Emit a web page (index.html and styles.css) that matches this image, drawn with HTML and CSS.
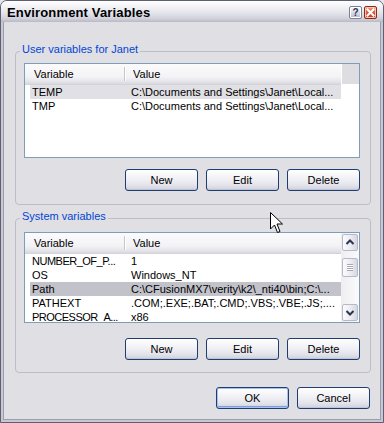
FILE: index.html
```html
<!DOCTYPE html>
<html>
<head>
<meta charset="utf-8">
<title>Environment Variables</title>
<link rel="stylesheet" href="styles.css">
</head>
<body>
<div class="window">
  <div class="titlebar">
    <span class="title">Environment Variables</span>
    <div class="caption-btns">
      <span class="cap-btn help">?</span>
      <span class="cap-btn close"><svg width="9" height="9" viewBox="0 0 9 9"><path d="M1.5 1.5 L7.5 7.5 M7.5 1.5 L1.5 7.5" stroke="#fff" stroke-width="2" stroke-linecap="square"/></svg></span>
    </div>
  </div>
  <div class="frame">
    <div class="client">
      <div class="group user">
        <span class="group-title">User variables for Janet</span>
        <div class="list user-list">
          <div class="list-main">
            <div class="list-header"><span class="hvar">Variable</span><span class="hsep"></span><span class="hval">Value</span></div>
            <div class="row sel-light"><span class="cvar">TEMP</span><span class="cval">C:\Documents and Settings\Janet\Local...</span></div>
            <div class="row"><span class="cvar">TMP</span><span class="cval">C:\Documents and Settings\Janet\Local...</span></div>
          </div>
          <div class="list-side">
            <div class="header-corner"></div>
          </div>
        </div>
        <div class="btn-row">
          <button class="btn">New</button>
          <button class="btn">Edit</button>
          <button class="btn">Delete</button>
        </div>
      </div>
      <div class="group sys">
        <span class="group-title">System variables</span>
        <div class="list sys-list">
          <div class="list-main">
            <div class="list-header"><span class="hvar">Variable</span><span class="hsep"></span><span class="hval">Value</span></div>
            <div class="row"><span class="cvar tight">NUMBER_OF_P...</span><span class="cval">1</span></div>
            <div class="row"><span class="cvar">OS</span><span class="cval">Windows_NT</span></div>
            <div class="row sel"><span class="cvar">Path</span><span class="cval">C:\CFusionMX7\verity\k2\_nti40\bin;C:\...</span></div>
            <div class="row"><span class="cvar">PATHEXT</span><span class="cval">.COM;.EXE;.BAT;.CMD;.VBS;.VBE;.JS;....</span></div>
            <div class="row"><span class="cvar tight">PROCESSOR_A...</span><span class="cval">x86</span></div>
          </div>
          <div class="list-side scrollbar">
            <div class="sb-btn"><svg width="14" height="15" viewBox="0 0 14 15"><path d="M3.5 9 L7 5.5 L10.5 9" fill="none" stroke="#2b3552" stroke-width="2"/></svg></div>
            <div class="sb-thumb"><span class="grip"></span></div>
            <div class="sb-btn down"><svg width="14" height="15" viewBox="0 0 14 15"><path d="M3.5 6 L7 9.5 L10.5 6" fill="none" stroke="#2b3552" stroke-width="2"/></svg></div>
          </div>
        </div>
        <div class="btn-row">
          <button class="btn">New</button>
          <button class="btn">Edit</button>
          <button class="btn">Delete</button>
        </div>
      </div>
      <div class="footer">
        <button class="btn default">OK</button>
        <button class="btn">Cancel</button>
      </div>
    </div>
  </div>
  <svg class="cursor" width="14" height="23" viewBox="0 0 14 23"><path d="M0.5 0.5 V17 L4.5 13 L7.5 20.5 L10 19.5 L7 12 H12.5 Z" fill="#fff" stroke="#000" stroke-width="1" stroke-linejoin="miter"/></svg>
</div>
</body>
</html>
```
FILE: styles.css
```css
html, body {
  margin: 0;
  padding: 0;
  background: #e6e6ea;
}
body {
  font-family: "Liberation Sans", Arial, sans-serif;
  font-size: 11px;
  color: #000;
}
.window {
  position: relative;
  width: 384px;
  height: 423px;
  box-sizing: border-box;
  border: 1px solid #5d6072;
  border-radius: 7px 7px 0 0;
  background: #e0dfe3;
  display: flex;
  flex-direction: column;
  overflow: hidden;
}
.titlebar {
  flex: none;
  height: 21px;
  box-sizing: border-box;
  display: flex;
  align-items: center;
  padding: 1px 6px 0 6px;
  background: linear-gradient(#ffffff 0, #f4f4f7 25%, #e2e2e9 60%, #d0d0da 85%, #b9b9c6 100%);
}
.title {
  flex: 1;
  font-weight: bold;
  font-size: 13px;
  letter-spacing: 0.15px;
  line-height: 19px;
  color: #000;
}
.caption-btns {
  display: flex;
  gap: 2px;
}
.cap-btn {
  width: 13px;
  height: 13px;
  box-sizing: border-box;
  border-radius: 2px;
  display: flex;
  align-items: center;
  justify-content: center;
}
.cap-btn.help {
  border: 1px solid #7c8098;
  box-shadow: inset 0 0 0 1px #fff;
  background: linear-gradient(#fbfbfd, #d9dae3 55%, #b3b6c6);
  font-weight: bold;
  font-size: 10px;
  line-height: 11px;
  color: #2c3454;
}
.cap-btn.close {
  border: 1px solid #8a2a18;
  box-shadow: inset 0 0 0 1px #f6c2b2;
  background: linear-gradient(#f2a080, #e25a36 50%, #c73a1a);
}
.frame {
  flex: 1;
  display: flex;
  border: 0 solid #c8c8d3;
  border-width: 0 2px 2px 2px;
}
.client {
  flex: 1;
  display: flex;
  flex-direction: column;
  border: 1px solid #9c9eb0;
  border-top: 0;
  padding: 29px 9px 0 11px;
  background: #e0dfe3;
}
.group {
  position: relative;
  flex: none;
  border: 1px solid #bebdc5;
  border-radius: 4px;
}
.group.user {
  padding: 11px 10px 13px 8px;
}
.group.sys {
  margin-top: 13px;
  padding: 13px 10px 12px 8px;
}
.group-title {
  position: absolute;
  top: -9px;
  left: 4px;
  padding: 0 2px;
  background: #e0dfe3;
  color: #0046d5;
  line-height: 13px;
}
.list {
  box-sizing: border-box;
  border: 1px solid #7f9db9;
  background: #fff;
  display: flex;
  overflow: hidden;
}
.user-list {
  height: 95px;
}
.sys-list {
  height: 91px;
}
.list-main {
  flex: 1;
  min-width: 0;
  overflow: hidden;
}
.list-side {
  flex: none;
  width: 18px;
}
.list-header {
  height: 21px;
  box-sizing: border-box;
  display: flex;
  align-items: center;
  border-bottom: 1px solid #d3d3da;
  background: linear-gradient(#fbfbfc 0, #f3f3f6 65%, #e6e6eb 85%, #d9d9e0 100%);
  white-space: nowrap;
}
.hvar {
  width: 99px;
  box-sizing: border-box;
  padding-left: 9px;
}
.hsep {
  width: 1px;
  height: 14px;
  background: #c5c4cb;
  box-shadow: 1px 0 0 #fff;
}
.hval {
  padding-left: 8px;
}
.header-corner {
  height: 20px;
  background: #dedee2;
  border-left: 1px solid #fff;
  box-sizing: border-box;
}
.row {
  display: flex;
  height: 14px;
  line-height: 14px;
  margin-left: 5px;
  white-space: nowrap;
}
.row .cvar {
  width: 99px;
  padding-left: 2px;
  flex: none;
  overflow: hidden;
}
.row .cvar.tight {
  letter-spacing: -0.5px;
}
.row.sel-light {
  background: #e0e0e5;
}
.row.sel {
  background: #c2c2ca;
}
.scrollbar {
  display: flex;
  flex-direction: column;
  box-sizing: border-box;
  padding: 1px 1px 1px 1px;
  background: linear-gradient(90deg, #eeeef2, #fbfbfc);
}
.sb-btn, .sb-thumb {
  height: 17px;
  box-sizing: border-box;
  border: 1px solid #b7b9c9;
  border-radius: 2px;
  background: linear-gradient(90deg, #fcfcfd, #e9e9ef 60%, #d6d7e0);
  display: flex;
  align-items: center;
  justify-content: center;
}
.sb-btn.down {
  margin-top: auto;
}
.sb-thumb {
  margin-top: 7px;
  height: 19px;
}
.grip {
  width: 6px;
  height: 7px;
  background: repeating-linear-gradient(#a7a9bb 0 1px, #fff 1px 2px);
}
.btn-row {
  display: flex;
  justify-content: flex-end;
  gap: 8px;
  margin-top: 11px;
}
.group.sys .btn-row {
  margin-top: 15px;
}
.btn {
  width: 73px;
  height: 22px;
  padding: 0;
  margin: 0;
  box-sizing: border-box;
  border: 1px solid #1f3e70;
  border-radius: 3px;
  font-family: "Liberation Sans", Arial, sans-serif;
  font-size: 11px;
  color: #000;
  background: linear-gradient(#ffffff 0, #f4f4f8 35%, #e4e4ec 75%, #cfd0dc 100%);
  box-shadow: inset 0 -1px 0 #c2c4d6;
}
.btn.default {
  box-shadow: inset 0 0 0 1px #a9c1ee, inset 0 -2px 0 #7f9ce0;
}
.footer {
  display: flex;
  justify-content: flex-end;
  gap: 8px;
  margin-top: 14px;
  padding-right: 1px;
}
.cursor {
  position: absolute;
  left: 269px;
  top: 211px;
}
```
